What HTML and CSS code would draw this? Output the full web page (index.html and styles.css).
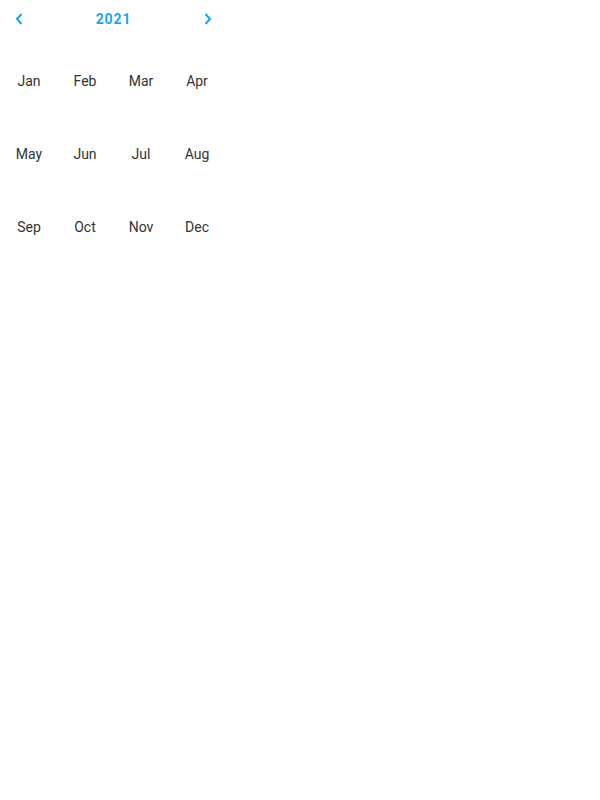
FILE: index.html
```html
<!DOCTYPE html>
<html>
<head>
<meta charset="utf-8">
<link rel="stylesheet" href="styles.css">
</head>
<body>
<div class="picker">
  <div class="header">
    <button class="nav prev" aria-label="Previous year">
      <svg width="8" height="12" viewBox="0 0 8 12"><path d="M6.5 1 L2 6 L6.5 11" fill="none" stroke="currentColor" stroke-width="2"/></svg>
    </button>
    <span class="year">2021</span>
    <button class="nav next" aria-label="Next year">
      <svg width="8" height="12" viewBox="0 0 8 12"><path d="M1.5 1 L6 6 L1.5 11" fill="none" stroke="currentColor" stroke-width="2"/></svg>
    </button>
  </div>
  <div class="months">
    <div class="month">Jan</div>
    <div class="month">Feb</div>
    <div class="month">Mar</div>
    <div class="month">Apr</div>
    <div class="month">May</div>
    <div class="month">Jun</div>
    <div class="month">Jul</div>
    <div class="month">Aug</div>
    <div class="month">Sep</div>
    <div class="month">Oct</div>
    <div class="month">Nov</div>
    <div class="month">Dec</div>
  </div>
</div>
</body>
</html>
```
FILE: styles.css
```css
html, body {
  margin: 0;
  padding: 0;
  background: #fff;
}
body {
  font-family: Roboto, "Noto Sans", Arial, sans-serif;
}
.picker {
  width: 226px;
}
.header {
  height: 38px;
  display: flex;
  align-items: center;
  justify-content: space-between;
  padding: 0 14px 0 15px;
}
.nav {
  border: 0;
  background: none;
  padding: 0;
  width: 8px;
  height: 12px;
  display: flex;
  color: #1ca3ec;
  cursor: pointer;
}
.year {
  font-size: 14px;
  font-weight: 700;
  color: #1ca3ec;
  letter-spacing: 0.9px;
}
.months {
  margin-top: 6px;
  padding-left: 1px;
  display: grid;
  grid-template-columns: repeat(4, 56px);
  grid-auto-rows: 73px;
}
.month {
  display: flex;
  align-items: center;
  justify-content: center;
  font-size: 14px;
  color: #333;
}
```
